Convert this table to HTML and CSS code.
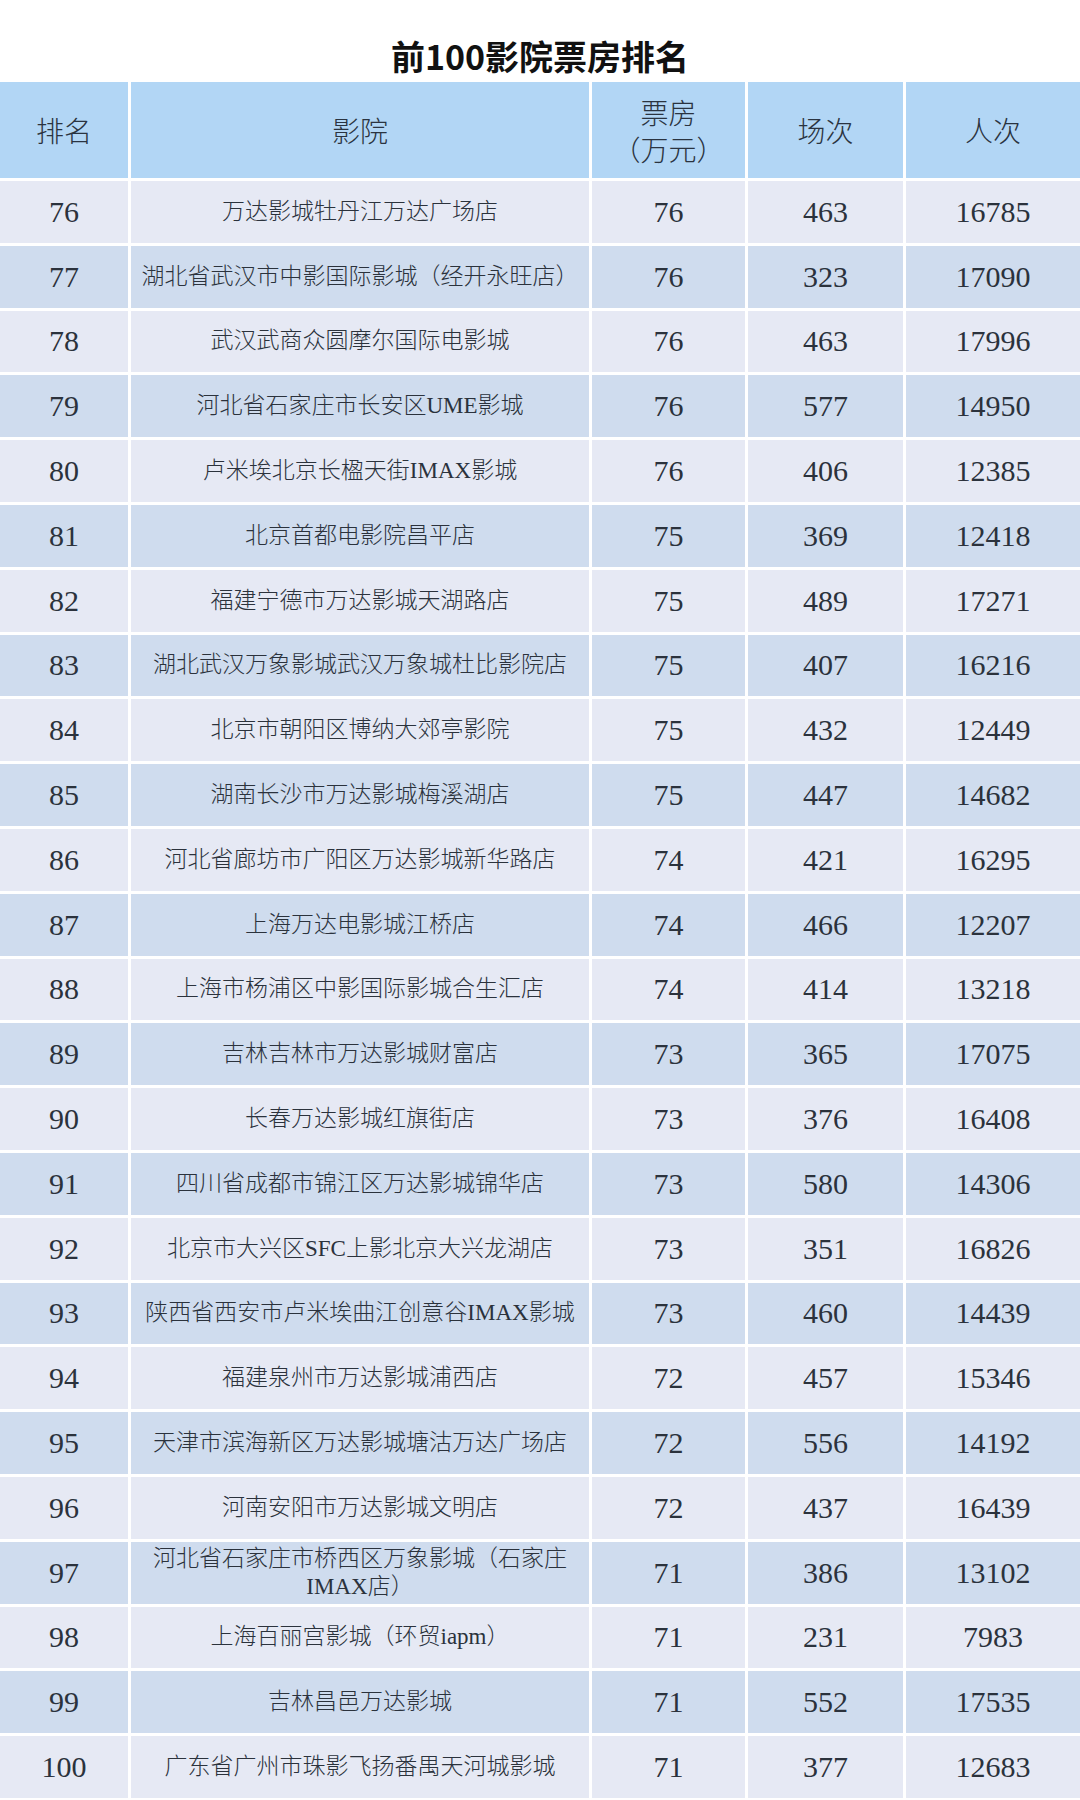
FILE: index.html
```html
<!DOCTYPE html>
<html lang="zh-CN">
<head>
<meta charset="utf-8">
<title>前100影院票房排名</title>
<link rel="stylesheet" href="styles.css">
</head>
<body>
<h1 class="title">前100影院票房排名</h1>
<div class="table">
  <div class="th">排名</div>
  <div class="th">影院</div>
  <div class="th th-two">票房<br>（万元）</div>
  <div class="th">场次</div>
  <div class="th">人次</div>

  <div class="td num">76</div><div class="td name">万达影城牡丹江万达广场店</div><div class="td num">76</div><div class="td num">463</div><div class="td num">16785</div>
  <div class="td num alt">77</div><div class="td name alt">湖北省武汉市中影国际影城（经开永旺店）</div><div class="td num alt">76</div><div class="td num alt">323</div><div class="td num alt">17090</div>
  <div class="td num">78</div><div class="td name">武汉武商众圆摩尔国际电影城</div><div class="td num">76</div><div class="td num">463</div><div class="td num">17996</div>
  <div class="td num alt">79</div><div class="td name alt">河北省石家庄市长安区UME影城</div><div class="td num alt">76</div><div class="td num alt">577</div><div class="td num alt">14950</div>
  <div class="td num">80</div><div class="td name">卢米埃北京长楹天街IMAX影城</div><div class="td num">76</div><div class="td num">406</div><div class="td num">12385</div>
  <div class="td num alt">81</div><div class="td name alt">北京首都电影院昌平店</div><div class="td num alt">75</div><div class="td num alt">369</div><div class="td num alt">12418</div>
  <div class="td num">82</div><div class="td name">福建宁德市万达影城天湖路店</div><div class="td num">75</div><div class="td num">489</div><div class="td num">17271</div>
  <div class="td num alt">83</div><div class="td name alt">湖北武汉万象影城武汉万象城杜比影院店</div><div class="td num alt">75</div><div class="td num alt">407</div><div class="td num alt">16216</div>
  <div class="td num">84</div><div class="td name">北京市朝阳区博纳大郊亭影院</div><div class="td num">75</div><div class="td num">432</div><div class="td num">12449</div>
  <div class="td num alt">85</div><div class="td name alt">湖南长沙市万达影城梅溪湖店</div><div class="td num alt">75</div><div class="td num alt">447</div><div class="td num alt">14682</div>
  <div class="td num">86</div><div class="td name">河北省廊坊市广阳区万达影城新华路店</div><div class="td num">74</div><div class="td num">421</div><div class="td num">16295</div>
  <div class="td num alt">87</div><div class="td name alt">上海万达电影城江桥店</div><div class="td num alt">74</div><div class="td num alt">466</div><div class="td num alt">12207</div>
  <div class="td num">88</div><div class="td name">上海市杨浦区中影国际影城合生汇店</div><div class="td num">74</div><div class="td num">414</div><div class="td num">13218</div>
  <div class="td num alt">89</div><div class="td name alt">吉林吉林市万达影城财富店</div><div class="td num alt">73</div><div class="td num alt">365</div><div class="td num alt">17075</div>
  <div class="td num">90</div><div class="td name">长春万达影城红旗街店</div><div class="td num">73</div><div class="td num">376</div><div class="td num">16408</div>
  <div class="td num alt">91</div><div class="td name alt">四川省成都市锦江区万达影城锦华店</div><div class="td num alt">73</div><div class="td num alt">580</div><div class="td num alt">14306</div>
  <div class="td num">92</div><div class="td name">北京市大兴区SFC上影北京大兴龙湖店</div><div class="td num">73</div><div class="td num">351</div><div class="td num">16826</div>
  <div class="td num alt">93</div><div class="td name alt">陕西省西安市卢米埃曲江创意谷IMAX影城</div><div class="td num alt">73</div><div class="td num alt">460</div><div class="td num alt">14439</div>
  <div class="td num">94</div><div class="td name">福建泉州市万达影城浦西店</div><div class="td num">72</div><div class="td num">457</div><div class="td num">15346</div>
  <div class="td num alt">95</div><div class="td name alt">天津市滨海新区万达影城塘沽万达广场店</div><div class="td num alt">72</div><div class="td num alt">556</div><div class="td num alt">14192</div>
  <div class="td num">96</div><div class="td name">河南安阳市万达影城文明店</div><div class="td num">72</div><div class="td num">437</div><div class="td num">16439</div>
  <div class="td num alt">97</div><div class="td name alt">河北省石家庄市桥西区万象影城（石家庄IMAX店）</div><div class="td num alt">71</div><div class="td num alt">386</div><div class="td num alt">13102</div>
  <div class="td num">98</div><div class="td name">上海百丽宫影城（环贸iapm）</div><div class="td num">71</div><div class="td num">231</div><div class="td num">7983</div>
  <div class="td num alt">99</div><div class="td name alt">吉林昌邑万达影城</div><div class="td num alt">71</div><div class="td num alt">552</div><div class="td num alt">17535</div>
  <div class="td num">100</div><div class="td name">广东省广州市珠影飞扬番禺天河城影城</div><div class="td num">71</div><div class="td num">377</div><div class="td num">12683</div>
</div>
</body>
</html>
```

FILE: styles.css
```css
html, body {
  margin: 0;
  padding: 0;
  background: #ffffff;
}

body {
  width: 1080px;
  height: 1800px;
  overflow: hidden;
  font-family: "Liberation Serif", "Noto Sans CJK SC", serif;
  color: #2b323c;
}

.title {
  margin: 0;
  padding: 39px 0 9px;
  height: 34px;
  font-family: "Noto Sans CJK SC", "Noto Sans", sans-serif;
  font-weight: 700;
  font-size: 34px;
  line-height: 34px;
  text-align: center;
  color: #111111;
}

.table {
  display: grid;
  grid-template-columns: 128px 458px 153px 155px 174px;
  grid-auto-rows: 61.8px;
  grid-template-rows: 96px;
  gap: 3px;
  background: #ffffff;
}

.th {
  display: flex;
  align-items: center;
  justify-content: center;
  background: #b2d6f5;
  font-family: "Noto Sans CJK SC", sans-serif;
  font-weight: 300;
  font-size: 28px;
  line-height: 37px;
  text-align: center;
  color: #2a3340;
}

.th-two {
  padding-top: 2px;
}

.td {
  display: flex;
  align-items: center;
  justify-content: center;
  background: #e6e9f4;
  text-align: center;
}

.td.alt {
  background: #cfdcee;
}

.num {
  font-size: 30px;
}

.name {
  padding: 0 8px;
  font-size: 23px;
  line-height: 28px;
  font-weight: 300;
}
```
